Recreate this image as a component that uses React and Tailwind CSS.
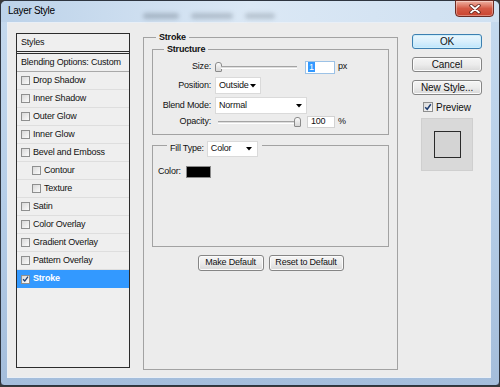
import React from "react";

const Box = ({ checked, big }) => (
  <span
    className={`${big ? "w-[10px] h-[10px]" : "w-[9px] h-[9px]"} shrink-0 border border-[#8e8f8f] bg-gradient-to-br from-[#d9d9d9] to-[#fbfbfb] flex items-center justify-center`}
  >
    {checked && (
      <svg width="8" height="8" viewBox="0 0 8 8">
        <path d="M1.2 4.2 L3.2 6.3 L6.8 1.2" fill="none" stroke="#1c3c70" strokeWidth="1.5" />
      </svg>
    )}
  </span>
);

const Arrow = () => (
  <svg width="6" height="4" viewBox="0 0 6 4" className="shrink-0">
    <polygon points="0,0 6,0 3,3.5" fill="#000" />
  </svg>
);

const Btn = ({ children, className }) => (
  <div
    className={`flex items-center justify-center rounded-[3px] border border-[#858585] bg-gradient-to-b from-[#f5f5f5] via-[#ececec] to-[#d8d8d8] shadow-[inset_0_0_0_1px_#fbfbfb] text-[#111] ${className}`}
  >
    {children}
  </div>
);

const Thumb = () => (
  <div className="w-[7px] h-[10px] shrink-0 rounded-t-[3px] rounded-b-[1px] border border-[#8a8a8a] bg-gradient-to-b from-[#fbfbfb] to-[#d6d6d6]" />
);

const Groove = () => (
  <div className="flex-1 h-[3px] border-t border-b border-t-[#a4a4a4] border-b-white bg-[#dedede]" />
);

export default function App() {
  const rows = [
    { t: "Drop Shadow" },
    { t: "Inner Shadow" },
    { t: "Outer Glow" },
    { t: "Inner Glow" },
    { t: "Bevel and Emboss" },
    { t: "Contour", i: true },
    { t: "Texture", i: true },
    { t: "Satin" },
    { t: "Color Overlay" },
    { t: "Gradient Overlay" },
    { t: "Pattern Overlay" },
    { t: "Stroke", sel: true },
  ];

  return (
    <div className="w-[500px] h-[387px] bg-[#3a3a3a] overflow-hidden font-['Liberation_Sans',Arial,sans-serif] text-[9px] tracking-[-0.2px] text-[#111]">
      <div className="w-[500px] h-[386px] rounded-t-[6px] rounded-b-[4px] border border-[#2e3540] bg-gradient-to-b from-[#c6daee] via-[#b6cee8] to-[#a4bddb] flex flex-col">
        {/* title bar */}
        <div className="h-[21px] flex items-start bg-gradient-to-r from-[#bcd2e9] via-[#dbe8f5] to-[#cfe0f1] rounded-t-[5px]">
          <div className="pl-[7px] pt-[4px] text-[10px] leading-[12px] tracking-[-0.3px] text-black">Layer Style</div>
          <div className="flex items-center gap-[12px] ml-[88px] mt-[12px] opacity-35">
            <div className="w-[36px] h-[6px] rounded-full bg-[#5d6b79] blur-[2px]" />
            <div className="w-[42px] h-[6px] rounded-full bg-[#6b7885] blur-[2px]" />
            <div className="w-[30px] h-[6px] rounded-full bg-[#76838f] blur-[2px]" />
          </div>
          <div className="flex-1" />
          <div className="mr-[5px] mt-[-1px] w-[39px] h-[17px] rounded-b-[4px] border border-[#6b2b23] bg-gradient-to-b from-[#eeb1a3] via-[#d45a46] to-[#c9432f] shadow-[inset_0_0_0_1px_rgba(255,255,255,0.35)] flex items-center justify-center">
            <svg width="12" height="10" viewBox="0 0 12 10">
              <path d="M2 1.5 L10 8.5 M10 1.5 L2 8.5" stroke="#5a1f18" strokeWidth="3.4" strokeLinecap="round" />
              <path d="M2 1.5 L10 8.5 M10 1.5 L2 8.5" stroke="#fff" strokeWidth="1.8" strokeLinecap="round" />
            </svg>
          </div>
        </div>

        {/* client */}
        <div className="ml-[6px] mr-[8px] h-[356px] border border-[#e9eff6] bg-[#ececec] flex items-start pl-[8px] pt-[8px]">
          {/* list */}
          <div className="mt-[2px] w-[114px] h-[335px] border border-[#2c2c2c] bg-[#efefef] flex flex-col">
            <div className="h-[18px] border-b border-[#2c2c2c] pl-[4px] flex items-center">Styles</div>
            <div className="h-[1px] mt-[1px] bg-[#2c2c2c]" />
            <div className="h-[18px] border-b border-[#a9a9a9] pl-[4px] flex items-center">Blending Options: Custom</div>
            {rows.map((r) => (
              <div
                key={r.t}
                className={`h-[18px] flex items-center gap-[3px] ${r.i ? "pl-[15px]" : "pl-[4px]"} ${r.sel ? "bg-[#3399ff] text-white font-bold" : "border-b border-[#dedede]"}`}
              >
                <Box checked={r.sel} />
                <span>{r.t}</span>
              </div>
            ))}
          </div>

          {/* stroke group */}
          <fieldset className="ml-[13px] w-[255px] h-[339px] border border-[#a2a2a2] px-[8px] pt-0 flex flex-col">
            <legend className="ml-[4px] px-[3px] leading-[12px] font-bold">Stroke</legend>

            <fieldset className="border border-[#a2a2a2] px-0 pt-[5px] pb-[6px] flex flex-col">
              <legend className="ml-[11px] px-[3px] leading-[12px] font-bold">Structure</legend>
              {/* size */}
              <div className="h-[14px] flex items-center">
                <div className="w-[58px] text-right">Size:</div>
                <div className="ml-[4px] w-[86px] flex items-center">
                  <Thumb />
                  <div className="w-[76px] ml-[-1px] h-[3px] border-t border-b border-t-[#a4a4a4] border-b-white bg-[#dedede]" />
                </div>
                <div className="ml-[4px] w-[30px] h-[13px] border border-[#9cc2e6] bg-white flex items-center pl-[2px]">
                  <span className="bg-[#3399ff] text-white px-[1px] leading-[10px]">1</span>
                </div>
                <div className="ml-[3px]">px</div>
              </div>
              {/* position */}
              <div className="mt-[3px] h-[17px] flex items-center">
                <div className="w-[58px] text-right">Position:</div>
                <div className="ml-[4px] w-[46px] h-[17px] bg-white border border-[#dadada] flex items-center justify-between pl-[3px] pr-[4px]">
                  <span>Outside</span>
                  <Arrow />
                </div>
              </div>
              {/* blend */}
              <div className="mt-[3px] h-[17px] flex items-center">
                <div className="w-[58px] text-right">Blend Mode:</div>
                <div className="ml-[4px] w-[92px] h-[17px] bg-white border border-[#dadada] flex items-center justify-between pl-[3px] pr-[4px]">
                  <span>Normal</span>
                  <Arrow />
                </div>
              </div>
              {/* opacity */}
              <div className="mt-[2px] h-[12px] flex items-center">
                <div className="w-[58px] text-right">Opacity:</div>
                <div className="ml-[4px] w-[86px] flex items-center pl-[3px]">
                  <Groove />
                  <div className="ml-[-1px]">
                    <Thumb />
                  </div>
                </div>
                <div className="ml-[6px] w-[28px] h-[12px] border border-[#d2d2d2] bg-white flex items-center pl-[3px]">100</div>
                <div className="ml-[3px]">%</div>
              </div>
            </fieldset>

            <fieldset className="mt-[6px] border border-[#a2a2a2] pl-[5px] pt-[16px] pb-[68px]">
              <legend className="ml-[9px] pl-[3px] pr-[4px] h-[9px] flex items-start gap-[3px]">
                <span className="mt-[1px] leading-[12px]">Fill Type:</span>
                <div className="w-[51px] h-[16px] bg-white border border-[#dadada] flex items-center justify-between pl-[3px] pr-[5px]">
                  <span>Color</span>
                  <Arrow />
                </div>
              </legend>
              <div className="h-[12px] flex items-center">
                <div className="w-[28px]">Color:</div>
                <div className="w-[25px] h-[12px] bg-black border border-[#8a8a8a]" />
              </div>
            </fieldset>

            <div className="mt-[8px] flex justify-center gap-[5px]">
              <Btn className="w-[66px] h-[16px]">Make Default</Btn>
              <Btn className="w-[75px] h-[16px]">Reset to Default</Btn>
            </div>
          </fieldset>

          {/* right column */}
          <div className="ml-[14px] w-[70px] flex flex-col items-center text-[10px] tracking-[-0.1px]">
            <div className="mt-[3px] w-[70px] h-[15px] rounded-[3px] border border-[#3c7fb1] bg-gradient-to-b from-[#eaf6fd] via-[#d9effc] to-[#bde5fc] shadow-[inset_0_0_0_1px_#cdeefb] flex items-center justify-center text-[#111]">
              OK
            </div>
            <Btn className="mt-[8px] w-[70px] h-[15px]">Cancel</Btn>
            <Btn className="mt-[8px] w-[70px] h-[15px]">New Style...</Btn>
            <div className="mt-[7px] h-[10px] flex items-center gap-[3px]">
              <Box checked big />
              <span>Preview</span>
            </div>
            <div className="mt-[6px] w-[52px] h-[53px] bg-[#d9d9d9] border border-[#cfcfcf] flex items-center justify-center">
              <div className="w-[27px] h-[27px] bg-[#d4d4d4] border-[1.5px] border-[#2a2a2a]" />
            </div>
          </div>
        </div>
      </div>
    </div>
  );
}
